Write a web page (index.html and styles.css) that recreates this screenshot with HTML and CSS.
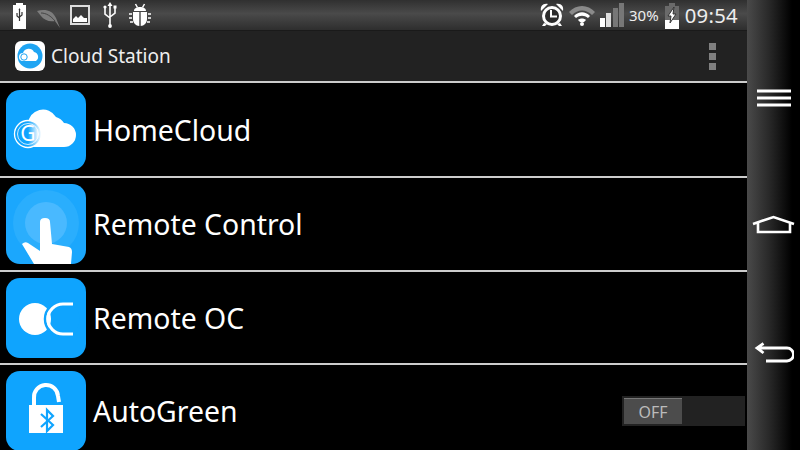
FILE: index.html
```html
<!DOCTYPE html>
<html lang="en">
<head>
<meta charset="utf-8">
<title>Cloud Station</title>
<link rel="stylesheet" href="styles.css">
</head>
<body>
<div class="screen">
  <main class="main">
    <header class="status">
      <div class="status-left">
        <svg class="ico" width="16" height="27" viewBox="0 0 16 27"><path fill="#fff" d="M4 1h7v2h3v24H1V3h3z"/><path fill="none" stroke="#333" stroke-width="1.2" d="M7.500 19v-11M5 11v3l2.500 2M10 10v3l-2.500 2"/><path fill="#333" d="M6.500 8l1-2 1 2z"/></svg>
        <svg class="ico" width="24" height="27" viewBox="0 0 24 27"><path fill="#7d7d7d" d="M0 9c8-2 15-1 19 7l4 10-5-7c-6 1-11-1-14-5z"/><path fill="none" stroke="#444" d="M4 11c5 0 10 3 14 8"/></svg>
        <svg class="ico" width="20" height="20" viewBox="0 0 20 20"><rect x="1" y="1" width="18" height="18" fill="#3a3a3a" stroke="#ddd" stroke-width="2"/><path fill="#fff" d="M3 17v-3l3-3 2 2 3-3 3 3 3 0v4z"/></svg>
        <svg class="ico usb" width="14" height="26" viewBox="0 0 14 26"><path fill="none" stroke="#fff" stroke-width="1.600" d="M7 24V3M2 6v6l5 4M12 6v5l-5 4"/><path fill="#fff" d="M7 0l2.500 4h-5z"/><circle cx="2" cy="5" r="1.600" fill="#fff"/><rect x="10.500" y="3.500" width="3" height="3" fill="#fff"/><circle cx="7" cy="24" r="1.900" fill="#fff"/></svg>
        <svg class="ico bug" width="22" height="24" viewBox="0 0 22 24"><path fill="#fff" d="M5 8c0-3 3-4 6-4s6 1 6 4zM4 9h6.300v14C7 23 4 20 4 16zM11.700 9H18v7c0 4-3 7-6.300 7z"/><path fill="none" stroke="#fff" stroke-width="1.500" d="M6.500 1l2 3.500M15.500 1l-2 3.500M0 11h3M19 11h3M0 15h3M19 15h3M1 19h3M18 19h3"/></svg>
      </div>
      <div class="status-right">
        <svg class="ico" width="24" height="24" viewBox="0 0 24 24"><circle cx="12" cy="13" r="8.500" fill="#2c2c2c" stroke="#fff" stroke-width="3"/><path fill="none" stroke="#fff" stroke-width="2" d="M11 7v6.500H17"/><path fill="#fff" d="M1 8C0 3 3 0 8 1zM23 8c1-5-2-8-7-7zM4 20l-2 3h3l2-2zM20 20l2 3h-3l-2-2z"/></svg>
        <svg class="ico" width="26" height="22" viewBox="0 0 26 22"><path fill="#8a8a8a" d="M0 8c7-8 19-8 26 0l-3 3C17 5 9 5 3 11z"/><path fill="#fff" d="M5 12c5-5 11-5 16 0l-2 2c-4-3-8-3-12 0zM9 16c2-2 6-2 8 0l-2 2h-4z"/><circle cx="13" cy="20" r="2" fill="#fff"/></svg>
        <div class="signal"><i class="bar b1"></i><i class="bar b2"></i><i class="bar b3"></i><i class="bar b4"></i></div>
        <span class="pct">30%</span>
        <svg class="ico" width="16" height="27" viewBox="0 0 16 27"><path fill="#6a6a6a" d="M5 1h6v3h4v14H1V4h4z"/><path fill="#fff" d="M1 18h14v9H1z"/><path fill="#fff" stroke="#333" stroke-width="1" d="M10 5L4 14h3l-1 7 6-9H9z"/></svg>
        <span class="clock">09:54</span>
      </div>
    </header>
    <div class="action">
      <svg class="app" width="30" height="30" viewBox="0 0 30 30"><rect width="30" height="30" rx="6" fill="#fff"/><circle cx="15" cy="15" r="12.500" fill="#1fa5f3"/><path fill="#fff" d="M8 20a4 4 0 0 1 0-8 6 6 0 0 1 11-1 5 5 0 0 1 2 9z"/><circle cx="9" cy="16" r="3.200" fill="none" stroke="#1fa5f3"/></svg>
      <span class="title">Cloud Station</span>
      <div class="overflow"><i class="dot"></i><i class="dot"></i><i class="dot"></i></div>
    </div>
    <ul class="list">
      <li class="row">
        <svg class="tile" viewBox="0 0 80 80"><defs><linearGradient id="gFade"><stop offset="0.500" stop-color="#0fa4fe"/><stop offset="1" stop-color="#fff"/></linearGradient></defs><rect width="80" height="80" rx="14" fill="#0fa4fe"/><path fill="#fff" d="M22 57V34a15 15 0 0 1 28-7 14 14 0 0 1 8 6 12 12 0 0 1 0 24z"/><circle cx="22" cy="44" r="13.500" fill="url(#gFade)" stroke="#fff" stroke-width="1.300"/><circle cx="22" cy="44" r="10.500" fill="url(#gFade)" stroke="#fff" stroke-width="0.800"/><text class="g" x="22" y="51" text-anchor="middle">G</text></svg>
        <span class="label">HomeCloud</span>
      </li>
      <li class="row">
        <svg class="tile" viewBox="0 0 80 80"><rect width="80" height="80" rx="14" fill="#1ba7fd"/><circle cx="40" cy="39" r="33" fill="#2aaefd"/><circle cx="40" cy="39" r="21" fill="#49b9ff"/><path fill="#fff" d="M16 60q3-3 6-1l12 8V38q0-4 5-4t5 4l2 22 17 3q3 1 3 5l-1 12H28z"/></svg>
        <span class="label">Remote Control</span>
      </li>
      <li class="row">
        <svg class="tile" viewBox="0 0 80 80"><rect width="80" height="80" rx="14" fill="#0fa4fe"/><circle cx="29" cy="41" r="16" fill="#fff"/><circle cx="57" cy="41" r="18" fill="none" stroke="#0fa4fe" stroke-width="2.500"/><path fill="none" stroke="#fff" stroke-width="3" d="M67 26H57a15 15 0 0 0 0 30h10"/></svg>
        <span class="label">Remote OC</span>
      </li>
      <li class="row">
        <svg class="tile" viewBox="0 0 80 80"><rect width="80" height="80" rx="14" fill="#0fa4fe"/><rect x="23" y="34" width="34" height="28" fill="#fff"/><path fill="none" stroke="#fff" stroke-width="4" d="M28 35V27a12 12 0 0 1 24-2l1 6"/><path fill="none" stroke="#0fa4fe" stroke-width="2.200" d="M35 43l12 11-6 6V39l6 6-12 11"/></svg>
        <span class="label">AutoGreen</span>
        <div class="toggle"><span class="knob">OFF</span></div>
      </li>
    </ul>
  </main>
  <nav class="nav">
    <svg class="menu" width="36" height="20" viewBox="0 0 36 20"><path stroke="#fff" stroke-width="3" d="M1 3h34M1 10h34M1 17h34"/></svg>
    <svg class="home" width="44" height="20" viewBox="0 0 44 20"><path fill="none" stroke="#fff" stroke-width="2.600" d="M1 9L21.500 2 42 9M6 8v9h32V8"/></svg>
    <svg class="back" width="40" height="22" viewBox="0 0 40 22"><path fill="none" stroke="#fff" stroke-width="2.800" d="M9.500 1.500L3 6l6.500 5M3 6h30a6.500 6.500 0 0 1 0 13H12"/></svg>
  </nav>
</div>
</body>
</html>
```
FILE: styles.css
```css
* { box-sizing: border-box; }
html, body { margin: 0; padding: 0; background: #000; }
.screen { width: 800px; height: 450px; display: flex; overflow: hidden; font-family: "Noto Sans", "Open Sans", sans-serif; color: #fff; }
.main { width: 747px; display: flex; flex-direction: column; }
.status { height: 31px; flex: none; display: flex; justify-content: space-between; align-items: center; padding: 0 9px 0 12px; background: linear-gradient(#303030, #4a4a4a 45%, #2e2e2e); border-bottom: 1px solid #1a1a1a; }
.status-left, .status-right { display: flex; align-items: center; }
.status-left { gap: 9px; }
.status-right { gap: 5px; }
.ico { display: block; flex: none; }
.usb { margin-left: 4px; }
.bug { margin-left: 3px; }
.signal { display: flex; align-items: flex-end; gap: 1.330px; height: 24px; }
.bar { display: block; width: 5px; }
.b1 { height: 9px; background: #fff; }
.b2 { height: 14px; background: #ddd; }
.b3 { height: 19px; background: #777; }
.b4 { height: 24px; background: #777; }
.pct { font-size: 15px; color: #eee; }
.clock { font-size: 20.300px; letter-spacing: .3px; color: #eee; }
.action { height: 50px; flex: none; display: flex; align-items: center; padding: 0 31px 0 15px; background: #222; }
.app { flex: none; }
.title { margin-left: 6px; font-size: 19px; color: #eee; flex: 1; }
.overflow { display: flex; flex-direction: column; gap: 3px; }
.dot { display: block; width: 7px; height: 7px; background: #808080; }
.list { list-style: none; margin: 0; padding: 0; flex: 1; overflow: hidden; }
.row { height: 94px; display: flex; align-items: center; padding: 7px 2px 7px 6px; border-top: 2px solid #ccc; }
.row:first-child { height: 95px; }
.row:nth-child(3) { height: 93px; }
.tile { width: 80px; height: 80px; flex: none; }
.g { font: 21px "Noto Sans", sans-serif; fill: #fff; }
.label { margin-left: 7px; font-size: 28.400px; flex: 1; }
.toggle { width: 123px; height: 30px; padding: 2px; background: #222; display: flex; }
.knob { width: 58px; background: #4c4c4c; border-top: 1px solid #777; color: #bbb; font-size: 16px; display: flex; align-items: center; justify-content: center; }
.nav { width: 53px; flex: none; display: flex; flex-direction: column; align-items: center; background: linear-gradient(90deg, #4a4a4a, #2a2a2a 40%, #000 85%); }
.menu { margin-top: 88px; }
.home { margin-top: 107px; }
.back { margin-top: 107px; }
```
